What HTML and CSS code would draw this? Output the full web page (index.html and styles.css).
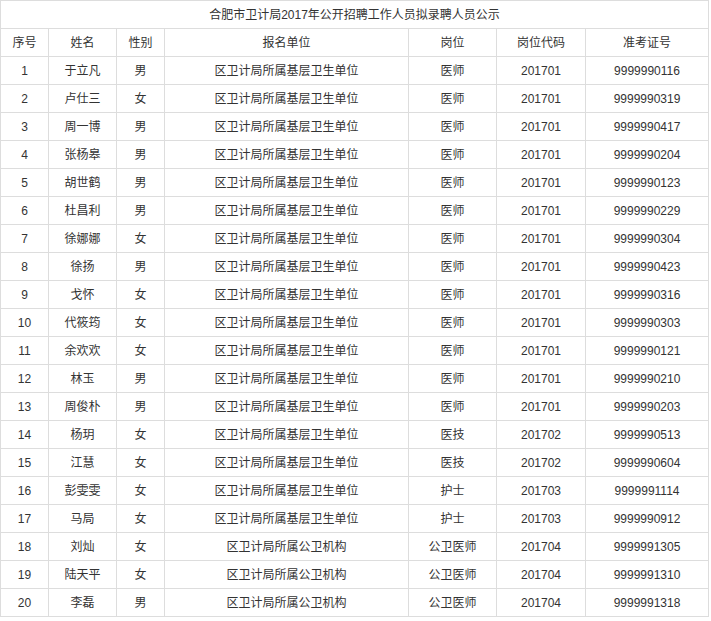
FILE: index.html
```html
<!DOCTYPE html>
<html lang="zh-CN">
<head>
<meta charset="utf-8">
<title>合肥市卫计局2017年公开招聘工作人员拟录聘人员公示</title>
<link rel="stylesheet" href="styles.css">
</head>
<body>
<table class="list">
  <colgroup>
    <col class="c1"><col class="c2"><col class="c3"><col class="c4"><col class="c5"><col class="c6"><col class="c7">
  </colgroup>
  <tbody>
    <tr><td colspan="7">合肥市卫计局2017年公开招聘工作人员拟录聘人员公示</td></tr>
    <tr><td>序号</td><td>姓名</td><td>性别</td><td>报名单位</td><td>岗位</td><td>岗位代码</td><td>准考证号</td></tr>
    <tr><td>1</td><td>于立凡</td><td>男</td><td>区卫计局所属基层卫生单位</td><td>医师</td><td>201701</td><td>9999990116</td></tr>
    <tr><td>2</td><td>卢仕三</td><td>女</td><td>区卫计局所属基层卫生单位</td><td>医师</td><td>201701</td><td>9999990319</td></tr>
    <tr><td>3</td><td>周一博</td><td>男</td><td>区卫计局所属基层卫生单位</td><td>医师</td><td>201701</td><td>9999990417</td></tr>
    <tr><td>4</td><td>张杨皋</td><td>男</td><td>区卫计局所属基层卫生单位</td><td>医师</td><td>201701</td><td>9999990204</td></tr>
    <tr><td>5</td><td>胡世鹤</td><td>男</td><td>区卫计局所属基层卫生单位</td><td>医师</td><td>201701</td><td>9999990123</td></tr>
    <tr><td>6</td><td>杜昌利</td><td>男</td><td>区卫计局所属基层卫生单位</td><td>医师</td><td>201701</td><td>9999990229</td></tr>
    <tr><td>7</td><td>徐娜娜</td><td>女</td><td>区卫计局所属基层卫生单位</td><td>医师</td><td>201701</td><td>9999990304</td></tr>
    <tr><td>8</td><td>徐扬</td><td>男</td><td>区卫计局所属基层卫生单位</td><td>医师</td><td>201701</td><td>9999990423</td></tr>
    <tr><td>9</td><td>戈怀</td><td>女</td><td>区卫计局所属基层卫生单位</td><td>医师</td><td>201701</td><td>9999990316</td></tr>
    <tr><td>10</td><td>代筱筠</td><td>女</td><td>区卫计局所属基层卫生单位</td><td>医师</td><td>201701</td><td>9999990303</td></tr>
    <tr><td>11</td><td>余欢欢</td><td>女</td><td>区卫计局所属基层卫生单位</td><td>医师</td><td>201701</td><td>9999990121</td></tr>
    <tr><td>12</td><td>林玉</td><td>男</td><td>区卫计局所属基层卫生单位</td><td>医师</td><td>201701</td><td>9999990210</td></tr>
    <tr><td>13</td><td>周俊朴</td><td>男</td><td>区卫计局所属基层卫生单位</td><td>医师</td><td>201701</td><td>9999990203</td></tr>
    <tr><td>14</td><td>杨玥</td><td>女</td><td>区卫计局所属基层卫生单位</td><td>医技</td><td>201702</td><td>9999990513</td></tr>
    <tr><td>15</td><td>江慧</td><td>女</td><td>区卫计局所属基层卫生单位</td><td>医技</td><td>201702</td><td>9999990604</td></tr>
    <tr><td>16</td><td>彭雯雯</td><td>女</td><td>区卫计局所属基层卫生单位</td><td>护士</td><td>201703</td><td>9999991114</td></tr>
    <tr><td>17</td><td>马局</td><td>女</td><td>区卫计局所属基层卫生单位</td><td>护士</td><td>201703</td><td>9999990912</td></tr>
    <tr><td>18</td><td>刘灿</td><td>女</td><td>区卫计局所属公卫机构</td><td>公卫医师</td><td>201704</td><td>9999991305</td></tr>
    <tr><td>19</td><td>陆天平</td><td>女</td><td>区卫计局所属公卫机构</td><td>公卫医师</td><td>201704</td><td>9999991310</td></tr>
    <tr><td>20</td><td>李磊</td><td>男</td><td>区卫计局所属公卫机构</td><td>公卫医师</td><td>201704</td><td>9999991318</td></tr>
  </tbody>
</table>
</body>
</html>
```
FILE: styles.css
```css
html, body {
  margin: 0;
  padding: 0;
  background: #fff;
}

.list {
  border-collapse: collapse;
  table-layout: fixed;
  width: 708px;
  font-family: "Liberation Sans", "Noto Sans CJK SC", sans-serif;
  font-size: 12px;
  color: #333;
}

.list .c1 { width: 48px; }
.list .c2 { width: 68px; }
.list .c3 { width: 48px; }
.list .c4 { width: 244px; }
.list .c5 { width: 88px; }
.list .c6 { width: 89px; }
.list .c7 { width: 123px; }

.list td {
  border: 1px solid #ddd;
  height: 27px;
  padding: 0;
  text-align: center;
  vertical-align: middle;
  line-height: 16px;
  white-space: nowrap;
}
```
